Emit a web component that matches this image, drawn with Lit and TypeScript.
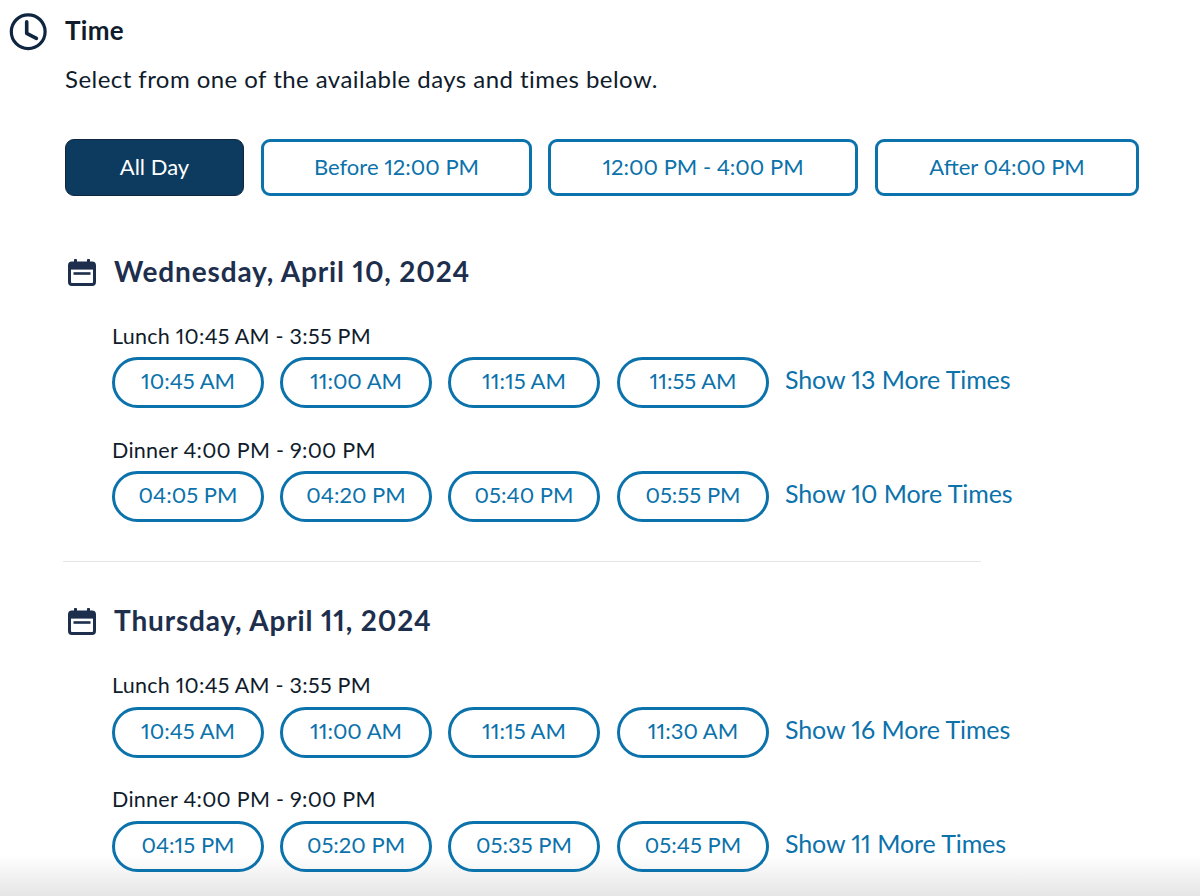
import { LitElement, html, css } from "lit";
import { customElement } from "lit/decorators.js";

const clock = html`<svg class="clock" viewBox="0 0 38 38" fill="none" stroke="#0f2540">
  <circle cx="19.2" cy="18.7" r="16.9" stroke-width="3.2"/>
  <path d="M17.7 8.9V20.3L27.4 25.4" stroke-linecap="round" stroke-linejoin="round" stroke-width="3.6"/>
</svg>`;

const calendar = html`<svg class="cal" viewBox="0 0 28 27" fill="none">
  <path d="M7.5 1.2v4M20.5 1.2v4" stroke="#1d2f4d" stroke-width="3" stroke-linecap="round"/>
  <rect x="1.5" y="4" width="25" height="21.5" rx="2.4" stroke="#1d2f4d" stroke-width="3"/>
  <rect x="1.5" y="4" width="25" height="6.6" fill="#1d2f4d"/>
  <rect x="5.5" y="13.2" width="17" height="2.6" fill="#1d2f4d"/>
</svg>`;

interface Meal { label: string; times: string[]; more: string }
interface Day { date: string; meals: Meal[] }

const days: Day[] = [
  {
    date: "Wednesday, April 10, 2024",
    meals: [
      { label: "Lunch 10:45 AM - 3:55 PM", times: ["10:45 AM", "11:00 AM", "11:15 AM", "11:55 AM"], more: "Show 13 More Times" },
      { label: "Dinner 4:00 PM - 9:00 PM", times: ["04:05 PM", "04:20 PM", "05:40 PM", "05:55 PM"], more: "Show 10 More Times" },
    ],
  },
  {
    date: "Thursday, April 11, 2024",
    meals: [
      { label: "Lunch 10:45 AM - 3:55 PM", times: ["10:45 AM", "11:00 AM", "11:15 AM", "11:30 AM"], more: "Show 16 More Times" },
      { label: "Dinner 4:00 PM - 9:00 PM", times: ["04:15 PM", "05:20 PM", "05:35 PM", "05:45 PM"], more: "Show 11 More Times" },
    ],
  },
];

const filters = [
  { t: "All Day", c: "f0 on" },
  { t: "Before 12:00 PM", c: "f1" },
  { t: "12:00 PM - 4:00 PM", c: "f2" },
  { t: "After 04:00 PM", c: "f3" },
];

@customElement("app-root")
export class AppRoot extends LitElement {
  static styles = css`
    :host {
      display: block;
      width: 1200px;
      height: 896px;
      overflow: hidden;
      background: linear-gradient(to bottom, #fff 0, #fff 855px, #e5e5e5 896px);
      font-family: Lato, "Open Sans", sans-serif;
      font-feature-settings: "pnum" 1;
      font-variant-numeric: proportional-nums;
      color: #101c2c;
      box-sizing: border-box;
    }
    .head { display: flex; padding: 13px 0 0 9px; height: 37px; }
    .clock { width: 38px; height: 38px; flex: none; }
    .title { margin-left: 18px; margin-top: -1px; font-size: 26px; font-weight: 700; line-height: 36px; letter-spacing: 0.3px; color: #101c2c; }
    .sub { margin: 11px 0 0 65px; font-size: 24px; line-height: 36px; color: #101c2c; letter-spacing: 0.45px; }
    .filters { display: flex; margin: 42px 0 0 65px; }
    .filter {
      box-sizing: border-box;
      height: 57px;
      border: 3px solid #0b72ab;
      border-radius: 9px;
      background: #fff;
      color: #0b72ab;
      font: inherit;
      font-size: 22px;
      padding: 0 0 2px;
      margin-right: 17px;
    }
    .f0 { width: 179px; }
    .f1 { width: 271px; margin-right: 16px; }
    .f2 { width: 310px; }
    .f3 { width: 264px; margin-right: 0; }
    .on { background: #0c3b5f; border: 1px solid #0f2540; color: #fff; }
    .day-head { display: flex; align-items: center; height: 40px; padding-left: 68px; }
    .cal { width: 28px; height: 27px; flex: none; }
    .date { margin-left: 18px; margin-top: -2px; font-size: 28px; font-weight: 700; color: #1d2f4d; line-height: 40px; letter-spacing: 0.85px; }
    .first { margin-top: 56px; }
    .second { margin-top: 39px; }
    .meal { margin-left: 112px; }
    .label { font-size: 21.5px; line-height: 30px; color: #101c2c; margin-top: 29px; letter-spacing: 0.27px; }
    .meal + .meal .label { margin-top: 27px; }
    .second ~ .meal + .meal .label { margin-top: 26px; }
    .times { display: flex; align-items: center; height: 51px; margin-top: 6px; }
    .second ~ .meal .times { margin-top: 7px; }
    .pill {
      box-sizing: border-box;
      width: 152px;
      height: 51px;
      border: 3px solid #0b72ab;
      border-radius: 26px;
      margin-right: 16px;
      background: transparent;
      color: #0b72ab;
      font: inherit;
      font-size: 22px;
      padding: 0 0 5px;
    }
    .pill:nth-child(3) { margin-right: 17px; }
    .more { color: #0b72ab; font-size: 25px; margin-top: -8px; letter-spacing: -0.1px; }
    .rule { height: 1px; background: #e2e4e6; margin: 39px 0 0 63px; width: 918px; }
  `;

  render() {
    return html`
      <div class="head">${clock}<div class="title">Time</div></div>
      <div class="sub">Select from one of the available days and times below.</div>
      <div class="filters">
        ${filters.map((f) => html`<button class="filter ${f.c}">${f.t}</button>`)}
      </div>
      ${days.map(
        (d, i) => html`
          ${i > 0 ? html`<div class="rule"></div>` : ""}
          <div class="day-head ${i === 0 ? "first" : "second"}">${calendar}<div class="date">${d.date}</div></div>
          ${d.meals.map(
            (m) => html`<div class="meal">
              <div class="label">${m.label}</div>
              <div class="times">
                ${m.times.map((t) => html`<button class="pill">${t}</button>`)}
                <span class="more">${m.more}</span>
              </div>
            </div>`
          )}
        `
      )}
    `;
  }
}
